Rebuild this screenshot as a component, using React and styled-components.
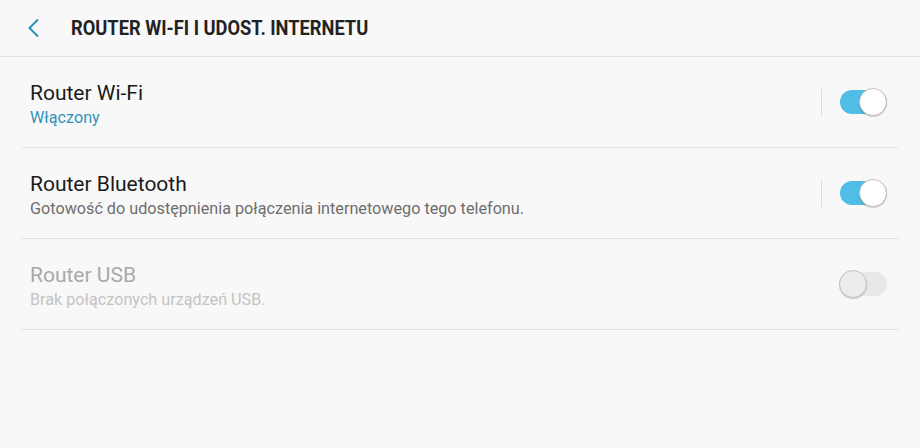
import styled, { createGlobalStyle } from "styled-components";

const GlobalStyle = createGlobalStyle`
    html, body {
        margin: 0;
        padding: 0;
        background: #f8f8f8;
    }

    body {
        font-family: Roboto, "Noto Sans", sans-serif;
    }
`;

const StyledPage = styled.div`
    width: 920px;
    height: 448px;
    background: #f8f8f8;
    overflow: hidden;
`;

const Header = styled.header`
    height: 56px;
    display: flex;
    align-items: center;
    border-bottom: 1px solid #e2e2e2;
    box-sizing: content-box;
`;

const BackButton = styled.button`
    width: 71px;
    height: 56px;
    padding: 0 0 0 26px;
    border: none;
    background: transparent;
    display: flex;
    align-items: center;
    cursor: pointer;
`;

const Title = styled.h1`
    margin: 0;
    font-family: Roboto, "Noto Sans", sans-serif;
    font-weight: 700;
    font-size: 21px;
    line-height: 24px;
    color: #222222;
    transform: scaleX(0.87);
    transform-origin: left center;
    white-space: nowrap;
`;

const List = styled.ul`
    list-style: none;
    margin: 0;
    padding: 0 22px;
`;

const Row = styled.li`
    height: 90px;
    display: flex;
    align-items: center;
    border-bottom: 1px solid #e2e2e2;
    padding: 0 11px 0 8px;
`;

const Texts = styled.div`
    flex: 1;
    display: flex;
    flex-direction: column;
    gap: 3px;
    padding-top: 4px;
`;

const Name = styled.span`
    font-size: 21px;
    line-height: 24px;
    color: ${({ $disabled }) => ($disabled ? "#a9a9a9" : "#1b1b1b")};
`;

const Summary = styled.span`
    font-size: 16.2px;
    line-height: 20px;
    color: ${({ $tone }) =>
        $tone === "accent" ? "#3393bd" : $tone === "muted" ? "#c4c4c4" : "#6e6e6e"};
`;

const Divider = styled.span`
    width: 1px;
    height: 27px;
    background: ${({ $hidden }) => ($hidden ? "transparent" : "#dadada")};
    margin-right: 18px;
`;

const Switch = styled.span`
    position: relative;
    width: 47px;
    height: 24px;
    border-radius: 12px;
    background: ${({ $on }) => ($on ? "#4fbde6" : "#e8e8e8")};

    &::after {
        content: "";
        position: absolute;
        top: -2px;
        left: ${({ $on }) => ($on ? "20px" : "0")};
        width: 26px;
        height: 26px;
        border-radius: 50%;
        background: ${({ $on }) => ($on ? "#ffffff" : "#ececec")};
        border: 1px solid #c2c2c2;
        box-shadow: 0 1px 1px rgba(0, 0, 0, 0.18);
        box-sizing: content-box;
        margin-left: -1px;
    }
`;

const items = [
    { name: "Router Wi-Fi", summary: "Włączony", tone: "accent", on: true },
    { name: "Router Bluetooth", summary: "Gotowość do udostępnienia połączenia internetowego tego telefonu.", on: true },
    { name: "Router USB", summary: "Brak połączonych urządzeń USB.", tone: "muted", on: false, disabled: true },
];

function App() {
    return <StyledPage>
        <GlobalStyle/>
        <Header>
            <BackButton aria-label="Wstecz">
                <svg width="14" height="20" viewBox="0 0 14 20">
                    <path d="M12 1.5 L3.5 10 L12 18.5" fill="none" stroke="#2f8fba" strokeWidth="2"/>
                </svg>
            </BackButton>
            <Title>ROUTER WI-FI I UDOST. INTERNETU</Title>
        </Header>
        <List>
            {items.map(item => (
                <Row key={item.name}>
                    <Texts>
                        <Name $disabled={item.disabled}>{item.name}</Name>
                        <Summary $tone={item.tone}>{item.summary}</Summary>
                    </Texts>
                    <Divider $hidden={item.disabled}/>
                    <Switch $on={item.on}/>
                </Row>
            ))}
        </List>
    </StyledPage>
}

export default App;
